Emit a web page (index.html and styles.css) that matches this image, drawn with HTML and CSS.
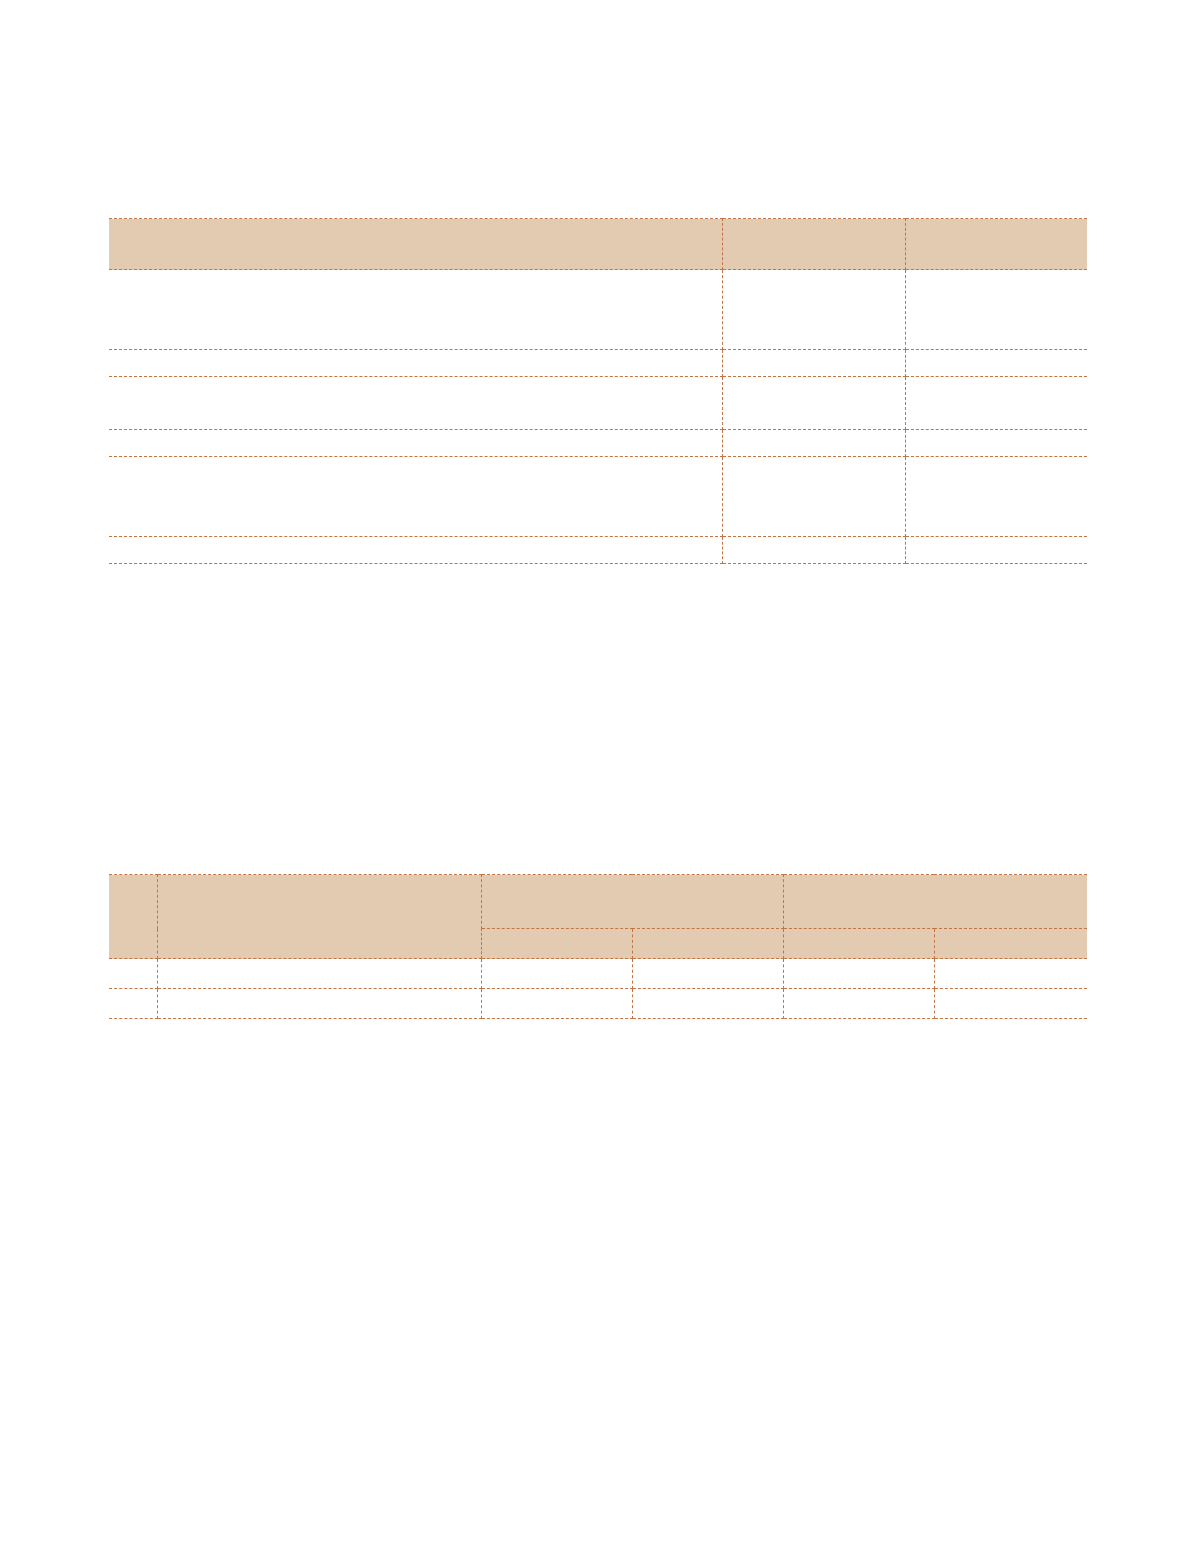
FILE: index.html
```html
<!DOCTYPE html>
<html>
<head>
<meta charset="utf-8">
<link rel="stylesheet" href="styles.css">
</head>
<body>
<div class="page">
  <table class="grid t1">
    <colgroup><col class="c1a"><col class="c1b"><col class="c1c"></colgroup>
    <thead>
      <tr class="h51"><th></th><th></th><th></th></tr>
    </thead>
    <tbody>
      <tr class="h80"><td></td><td></td><td></td></tr>
      <tr class="h27"><td></td><td></td><td></td></tr>
      <tr class="h53"><td></td><td></td><td></td></tr>
      <tr class="h27"><td></td><td></td><td></td></tr>
      <tr class="h80"><td></td><td></td><td></td></tr>
      <tr class="h27"><td></td><td></td><td></td></tr>
    </tbody>
  </table>

  <table class="grid t2">
    <colgroup><col class="c2a"><col class="c2b"><col class="c2c"><col class="c2c"><col class="c2c"><col class="c2d"></colgroup>
    <thead>
      <tr class="h54"><th rowspan="2"></th><th rowspan="2"></th><th colspan="2"></th><th colspan="2"></th></tr>
      <tr class="h30"><th></th><th></th><th></th><th></th></tr>
    </thead>
    <tbody>
      <tr class="h30"><td></td><td></td><td></td><td></td><td></td><td></td></tr>
      <tr class="h30"><td></td><td></td><td></td><td></td><td></td><td></td></tr>
    </tbody>
  </table>
</div>
</body>
</html>
```

FILE: styles.css
```css
html, body {
  margin: 0;
  padding: 0;
  background: #ffffff;
  font-family: "Liberation Sans", Arial, sans-serif;
}
.page {
  padding: 218px 0 0 109px;
}
.grid {
  border-collapse: collapse;
  table-layout: fixed;
  width: 978px;
}
.grid th, .grid td {
  padding: 0;
  border: 1px dashed #c27544;
}
.grid tr > :first-child { border-left: none; }
.grid tr > :last-child { border-right: none; }
.t2 thead tr:nth-child(2) > :first-child { border-left: 1px dashed #c27544; }
.grid th {
  background: #e3cbb2;
}
.t2 {
  margin-top: 310px;
}
.c1a { width: 613px; }
.c1b { width: 183px; }
.c1c { width: 182px; }
.c2a { width: 48px; }
.c2b { width: 324px; }
.c2c { width: 151px; }
.c2d { width: 153px; }
.h51 { height: 51px; }
.h80 { height: 80px; }
.h27 { height: 27px; }
.h53 { height: 53px; }
.h54 { height: 54px; }
.h30 { height: 30px; }
```
